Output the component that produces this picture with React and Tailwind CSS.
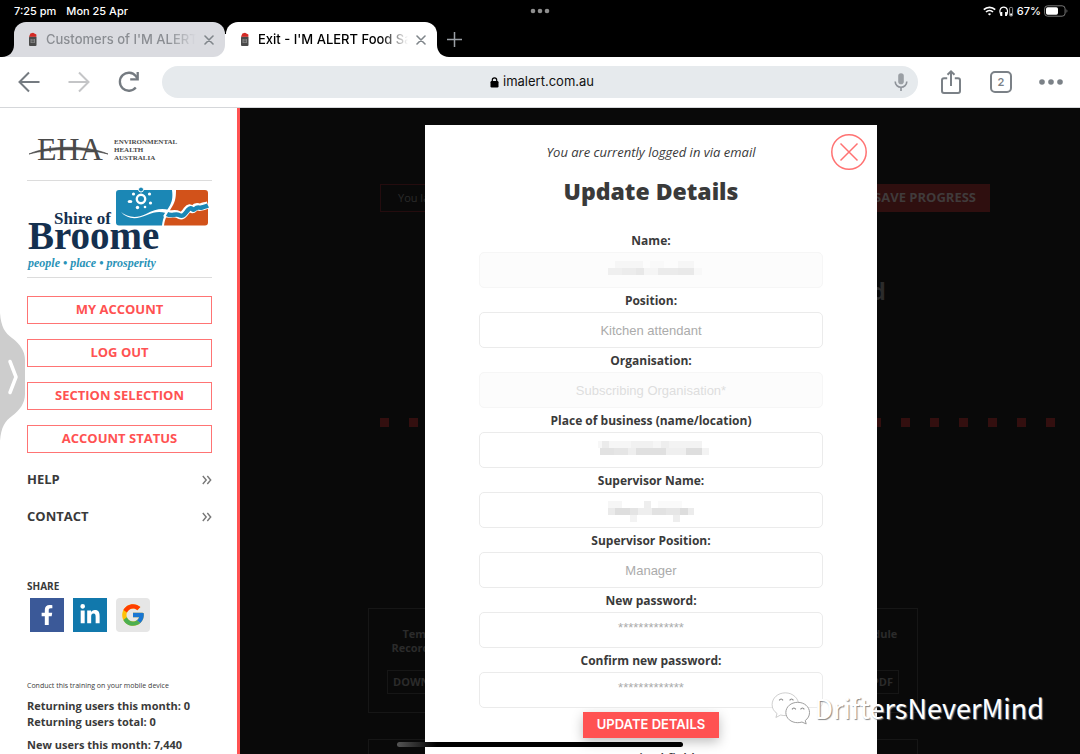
import { useState } from 'react'
import { FaFacebookF, FaLinkedinIn } from 'react-icons/fa'
import { FcGoogle } from 'react-icons/fc'

const accountLinks = ['MY ACCOUNT', 'LOG OUT', 'SECTION SELECTION', 'ACCOUNT STATUS']
const menuLinks = ['HELP', 'CONTACT']

// mask: [x, y, width, shade] cells of the hidden value, on a 7px grid
const fields = [
  {
    id: 'name',
    label: 'Name:',
    disabled: true,
    mask: [
      [7, 7, 28, '#f6f6f6'], [42, 7, 14, '#f9f9f9'], [70, 7, 16, '#f6f6f6'],
      [0, 14, 14, '#efefef'], [14, 14, 14, '#ececec'], [28, 14, 8, '#e8e8e8'], [36, 14, 14, '#f5f5f5'],
      [50, 14, 20, '#ebebeb'], [70, 14, 16, '#e9e9e9'], [86, 14, 8, '#f8f8f8'],
    ],
  },
  { id: 'position', label: 'Position:', value: 'Kitchen attendant' },
  { id: 'organisation', label: 'Organisation:', placeholder: 'Subscribing Organisation*', disabled: true },
  {
    id: 'business',
    label: 'Place of business (name/location)',
    mask: [
      [-10, 7, 4, '#f7f7f7'], [-6, 7, 7, '#ebebeb'], [1, 7, 22, '#f6f6f6'], [23, 7, 22, '#f1f1f1'],
      [45, 7, 8, '#f6f6f6'], [53, 7, 8, '#eeeeee'], [61, 7, 33, '#f3f3f3'],
      [-8, 14, 14, '#e2e2e2'], [6, 14, 14, '#e5e5e5'], [20, 14, 8, '#eeeeee'], [28, 14, 30, '#e0e0e0'],
      [58, 14, 20, '#efefef'], [78, 14, 16, '#dedede'], [94, 14, 7, '#f3f3f3'],
    ],
  },
  {
    id: 'supervisor',
    label: 'Supervisor Name:',
    mask: [
      [0, 7, 14, '#f6f6f6'], [36, 7, 7, '#eeeeee'], [50, 7, 24, '#fafafa'],
      [0, 14, 7, '#eaeaea'], [7, 14, 15, '#dedede'], [22, 14, 8, '#e4e4e4'], [30, 14, 14, '#eeeeee'],
      [44, 14, 14, '#e2e2e2'], [58, 14, 14, '#e6e6e6'], [72, 14, 8, '#dddddd'], [80, 14, 6, '#ececec'],
      [22, 21, 7, '#f3f3f3'], [65, 21, 7, '#eeeeee'],
    ],
  },
  { id: 'supervisor-position', label: 'Supervisor Position:', value: 'Manager' },
  { id: 'password', label: 'New password:', placeholder: '*************', type: 'password' },
  { id: 'confirm', label: 'Confirm new password:', placeholder: '*************', type: 'password' },
]

function Favicon() {
  return (
    <svg width="10" height="15" viewBox="0 0 10 15" className="shrink-0" aria-hidden="true">
      <rect x="1" y="4.5" width="7.5" height="9.5" rx="1" fill="#4a4a4a" />
      <rect x="2.6" y="7" width="4.2" height="4" fill="#8f8f8f" />
      <path d="M3.4 8h2.6M3.4 9.8h2.6" stroke="#333" strokeWidth="0.8" />
      <path d="M1 4.8 2.4 1.6 5 .8l3.4 1.6v2.4z" fill="#d42a25" />
    </svg>
  )
}

function CloseMark() {
  return (
    <svg width="10" height="10" viewBox="0 0 10 10" aria-hidden="true">
      <path d="M1 1l8 8M9 1l-8 8" stroke="#80868b" strokeWidth="1.6" strokeLinecap="round" />
    </svg>
  )
}

function Tab({ title, active }) {
  return (
    <div
      className={`relative flex h-[35px] w-[211px] items-center pr-[11px] pl-3.5 ${
        active ? 'rounded-t-xl bg-white text-black' : 'rounded-t-xl rounded-br-xl bg-[#dadbe0] text-[#8a8d92]'
      }`}
    >
      {!active && (
        <svg width="12" height="12" viewBox="0 0 12 12" className="absolute -left-3 bottom-0" aria-hidden="true">
          <path d="M12 0v12H0C7 12 12 7 12 0z" fill="#dadbe0" />
        </svg>
      )}
      {active && (
        <svg width="12" height="12" viewBox="0 0 12 12" className="absolute -right-3 bottom-0" aria-hidden="true">
          <path d="M0 0v12h12C5 12 0 7 0 0z" fill="#fff" />
        </svg>
      )}
      <Favicon />
      <a
        href="#tab"
        className="ml-2 flex-1 overflow-hidden whitespace-nowrap text-[13px] font-medium [mask-image:linear-gradient(to_right,black_82%,transparent)]"
      >
        {title}
      </a>
      <button type="button" aria-label="Close tab" className="ml-2">
        <CloseMark />
      </button>
    </div>
  )
}

function StatusBar() {
  return (
    <div className="relative flex h-[22px] items-center justify-between pl-3.5 pr-3 text-[11px] font-medium text-white">
      <div className="flex gap-2.5">
        <span>7:25 pm</span>
        <span>Mon 25 Apr</span>
      </div>
      <svg width="20" height="6" viewBox="0 0 20 6" className="absolute left-1/2 -translate-x-1/2" fill="#8e8e8e" aria-hidden="true">
        <circle cx="3" cy="3" r="2.3" />
        <circle cx="10" cy="3" r="2.3" />
        <circle cx="17" cy="3" r="2.3" />
      </svg>
      <div className="flex items-center gap-[3px]">
        <svg width="13" height="10" viewBox="0 0 13 10" fill="none" stroke="#fff" strokeWidth="1.7" aria-hidden="true">
          <path d="M.8 3.6a8.2 8.2 0 0 1 11.4 0M3 6a5 5 0 0 1 7 0" />
          <path d="M6.5 9.6 4.9 7.9a2.3 2.3 0 0 1 3.2 0z" fill="#fff" stroke="none" />
        </svg>
        <svg width="15" height="11" viewBox="0 0 15 11" fill="none" aria-hidden="true">
          <path d="M2.2 9.5C-.4 5 1.2 1.2 4.7 1.2S9.7 5 7.3 9.5" stroke="#fff" strokeWidth="1.2" />
          <path d="M2.4 6v4M7 6v4" stroke="#fff" strokeWidth="1.8" />
          <rect x="10.6" y="1.5" width="3" height="8.5" rx=".8" stroke="#aaa" strokeWidth=".8" />
          <path d="M11.2 7.5h1.8v2h-1.8z" fill="#fff" />
        </svg>
        <span>67%</span>
        <svg width="24" height="12" viewBox="0 0 24 12" fill="none" aria-hidden="true">
          <rect x=".6" y=".8" width="20.5" height="10.4" rx="3" stroke="#777" />
          <rect x="2" y="2.2" width="12" height="7.6" rx="1.7" fill="#fff" />
          <path d="M22.5 4.2c1.2.6 1.2 3 0 3.6z" fill="#777" />
        </svg>
      </div>
    </div>
  )
}

function Toolbar() {
  const button = 'flex h-full w-[50px] shrink-0 items-center justify-center'
  return (
    <div className="flex h-[51px] items-center border-b border-[#d5d7da] bg-white px-1">
      <button type="button" aria-label="Back" className={button}>
        <svg width="24" height="24" viewBox="0 0 24 24" fill="none" stroke="#757b81" strokeWidth="2">
          <path d="M22.5 12h-20M12 2.5 2.5 12l9.5 9.5" />
        </svg>
      </button>
      <button type="button" aria-label="Forward" className={button}>
        <svg width="24" height="24" viewBox="0 0 24 24" fill="none" stroke="#c4c5c7" strokeWidth="2">
          <path d="M1.5 12h20M12 2.5l9.5 9.5-9.5 9.5" />
        </svg>
      </button>
      <button type="button" aria-label="Reload" className={button}>
        <svg width="24" height="24" viewBox="0 0 24 24" fill="none" stroke="#757b81" strokeWidth="2.3">
          <path d="M18.8 17.5a9 9 0 1 1 0-11.5l1.7 2.5" />
          <path d="M20.7 2v7.3h-7.5" />
        </svg>
      </button>
      <div className="mx-2 flex h-8 flex-1 items-center rounded-full bg-[#e6eaed] pr-2.5 pl-7">
        <div className="flex flex-1 items-center justify-center gap-1">
          <svg width="9" height="11" viewBox="0 0 9 11" aria-hidden="true">
            <rect x=".5" y="4" width="8" height="6.5" rx="1.2" />
            <path d="M2.3 4.500V3a2.200 2.200 0 0 1 4.400 0v1.500" fill="none" stroke="#000" strokeWidth="1.2" />
          </svg>
          <span className="text-[13px] text-[#111]">imalert.com.au</span>
        </div>
        <button type="button" aria-label="Voice search">
          <svg width="14" height="20" viewBox="0 0 14 20" fill="none" stroke="#8d9298" strokeWidth="1.6">
            <rect x="4.2" y="1.2" width="5.6" height="11" rx="2.8" fill="#9a9fa4" stroke="none" />
            <path d="M1.2 9.5a5.8 5.8 0 0 0 11.6 0M7 15.3V19" />
          </svg>
        </button>
      </div>
      <button type="button" aria-label="Share" className={button}>
        <svg width="22" height="26" viewBox="0 0 22 26" fill="none" stroke="#7b8187" strokeWidth="2">
          <path d="M7.2 9.2H4a2 2 0 0 0-2 2V22a2 2 0 0 0 2 2h14a2 2 0 0 0 2-2V11.2a2 2 0 0 0-2-2h-3.2M11 17V2.5M7.5 5.8 11 2.3l3.5 3.5" />
        </svg>
      </button>
      <button type="button" aria-label="Open tabs" className={button}>
        <span className="flex size-[22px] items-center justify-center rounded-[5px] border-2 border-[#7b8187] text-[11px] font-semibold text-[#7b8187]">
          2
        </span>
      </button>
      <button type="button" aria-label="More" className={button}>
        <svg width="26" height="8" viewBox="0 0 26 8" fill="#7b8187">
          <circle cx="4" cy="4" r="2.8" />
          <circle cx="13" cy="4" r="2.8" />
          <circle cx="22" cy="4" r="2.8" />
        </svg>
      </button>
    </div>
  )
}

function EhaLogo() {
  return (
    <svg width="185" height="30" viewBox="0 0 185 30" fill="#4a4a4a" role="img" aria-label="Environmental Health Australia">
      <g fontFamily="Liberation Serif, serif">
        <text x="10" y="26" fontSize="32">EHA</text>
        <g fontSize="7" fontWeight="bold">
          <text x="87" y="10">ENVIRONMENTAL</text>
          <text x="87" y="18">HEALTH</text>
          <text x="87" y="26">AUSTRALIA</text>
        </g>
      </g>
      <path d="M2 20C22 11 60 11 81 20 58 14 24 14 2 20z" stroke="#4a4a4a" strokeWidth=".7" />
    </svg>
  )
}

function BroomeLogo() {
  return (
    <svg width="185" height="90" viewBox="0 0 185 90" role="img" aria-label="Shire of Broome">
      <path d="M92 3h53c1 8 0 12-3 17-4 6-6 11-7 18.5H92a3 3 0 0 1-3-3V6a3 3 0 0 1 3-3z" fill="#1b87b5" />
      <path d="M149 3h29a3 3 0 0 1 3 3v29.5a3 3 0 0 1-3 3h-41c1-7 3-11 7-17s5-10 5-18.5z" fill="#d2521a" />
      <path d="M94 25c6 5 15 7 25 2 9-5 16-6 23-4l-3 3c-7-2-12-1-19 2-11 5-20 4-26-3z" fill="#fff" />
      <path d="M138 26c5 3 9-1 13 1.5s5 1 9-4.5 4 2 7-1.5 4-.5 7-1.5 4-1 7-2" stroke="#fff" strokeWidth="7.5" fill="none" />
      <path d="M140 27c5 3 8-1 12 1s5 0 9-5 4 2 7-1 4-.5 7-1.5 4-1 6-2" stroke="#1b87b5" strokeWidth="4.5" fill="none" />
      <circle cx="114" cy="12" r="4.2" fill="none" stroke="#fff" strokeWidth="2.4" />
      <circle cx="114" cy="2.5" r="2.5" fill="#1b87b5" stroke="#fff" />
      <g fill="#fff">
        <circle cx="106.5" cy="7" r="1.6" />
        <circle cx="122.5" cy="7" r="1.6" />
        <ellipse cx="103" cy="14.5" rx="2.4" ry="1.6" />
        <circle cx="123.5" cy="16" r="1.6" />
        <circle cx="110.5" cy="20.5" r="1.7" />
        <circle cx="118" cy="20" r="1.3" />
      </g>
      <g fontFamily="Liberation Serif, serif" fill="#14304f">
        <text x="27" y="37" fontSize="17" fontWeight="bold">Shire of</text>
        <text x="1" y="62" fontSize="39" fontWeight="bold">Broome</text>
        <text x="1" y="80" fontSize="12" fontWeight="bold" fontStyle="italic" fill="#2a93b8">people • place • prosperity</text>
      </g>
    </svg>
  )
}

function Sidebar() {
  return (
    <aside className="flex w-60 shrink-0 flex-col border-r-3 border-[#ff5252] bg-white pl-[27px] pr-[25px] pt-[26px] text-[#3a3a3a]">
      <div className="border-b border-[#dcdcdc] pb-4">
        <EhaLogo />
      </div>
      <div className="border-b border-[#dcdcdc] pt-1.5">
        <BroomeLogo />
      </div>
      <nav className="mt-[18px]">
        <div className="flex flex-col gap-[15px]">
          {accountLinks.map((link) => (
            <a
              key={link}
              href="#account"
              className="flex h-7 items-center justify-center border border-[#ff7474] text-[13px] font-bold text-[#ff5252]"
            >
              {link}
            </a>
          ))}
        </div>
        <div className="mt-2 flex flex-col">
          {menuLinks.map((link) => (
            <a key={link} href="#menu" className="flex h-[37px] items-center justify-between text-[13px] font-bold">
              {link}
              <svg width="10" height="10" viewBox="0 0 10 10" fill="none" stroke="#777" strokeWidth="1.4" aria-hidden="true">
                <path d="M.8 1l3.4 4L.8 9M5.3 1l3.4 4-3.4 4" />
              </svg>
            </a>
          ))}
        </div>
      </nav>
      <h2 className="mt-[43px] text-[10px] leading-4 font-bold">SHARE</h2>
      <div className="mt-1 ml-[3px] flex gap-[9px]">
        <a href="#facebook" aria-label="Facebook" className="flex size-[34px] items-center justify-center bg-[#3b5998] text-white">
          <FaFacebookF size={20} />
        </a>
        <a href="#linkedin" aria-label="LinkedIn" className="flex size-[34px] items-center justify-center bg-[#1178ac] text-white">
          <FaLinkedinIn size={22} />
        </a>
        <a href="#google" aria-label="Google" className="flex size-[34px] items-center justify-center rounded-sm bg-[#e6e6e6]">
          <FcGoogle size={26} />
        </a>
      </div>
      <p className="mt-12 text-[7px] leading-3">Conduct this training on your mobile device</p>
      <div className="mt-1.5 text-[11px] leading-4 font-bold whitespace-nowrap">
        <p>Returning users this month: 0</p>
        <p>Returning users total: 0</p>
        <p className="mt-[7px]">New users this month: 7,440</p>
      </div>
    </aside>
  )
}

function DimmedPage() {
  return (
    <div className="pt-[76px] text-[#2b2b2b]">
      <div className="ml-[140px] mr-[90px] flex h-7 text-[11px]">
        <p className="flex flex-1 items-center border border-[#240c0e] pl-[17px]">You last</p>
        <button type="button" className="bg-[#2f0f0f] px-3.5 text-[13px] font-bold text-[#403b3b]">
          SAVE PROGRESS
        </button>
      </div>
      <h2 className="mt-[65px] mr-[194px] text-right text-[24px] leading-7 font-bold">Food</h2>
      <div className="mt-[113px] ml-[140px] mr-[25px] flex justify-between">
        {Array.from({ length: 24 }, (_, i) => (
          <span key={i} className="size-[9px] bg-[#330f0f]" />
        ))}
      </div>
      <div className="mt-[181px] ml-32 mr-[162px] flex h-[105px] justify-between border border-[#161616] px-[18px] pt-[18px] text-center text-[11px] leading-[14px] font-bold">
        <div className="flex flex-col items-center">
          <p className="h-7">Temperature<br />Recording Sheets</p>
          <button type="button" className="mt-[15px] h-6 border border-[#161616] px-[5px]">DOWNLOAD PDF</button>
        </div>
        <div className="flex flex-col items-center">
          <p className="h-7">Cleaning Schedule</p>
          <button type="button" className="mt-[15px] h-6 border border-[#161616] px-[5px]">DOWNLOAD PDF</button>
        </div>
      </div>
      <div className="mt-[26px] ml-32 mr-[162px] h-24 border border-[#161616]" />
    </div>
  )
}

function Field({ field }) {
  const [value, setValue] = useState(field.value ?? '')

  return (
    <div className="relative">
      <label htmlFor={field.id} className="block pt-0.5 text-center text-[12px] leading-[22px] font-bold">
        {field.label}
      </label>
      <input
        id={field.id}
        type={field.type ?? 'text'}
        value={value}
        placeholder={field.placeholder}
        disabled={field.disabled}
        onChange={(e) => setValue(e.target.value)}
        className={`block h-9 w-full rounded-[5px] border border-[#ebebeb] bg-white text-center font-['Liberation_Sans',sans-serif] text-[13px] text-[#ababab] placeholder:text-[#ababab] disabled:border-[#f6f6f6] disabled:bg-[#fcfcfc] disabled:placeholder:text-[#dedede] ${
          field.type === 'password' ? 'pb-1.5' : ''
        }`}
      />
      {field.mask && (
        <svg
          width="118"
          height="30"
          viewBox="-10 0 118 30"
          className="absolute bottom-1 left-[119px]"
          shapeRendering="crispEdges"
          aria-hidden="true"
        >
          {field.mask.map(([x, y, width, fill], i) => (
            <rect key={i} x={x} y={y} width={width} height="7" fill={fill} />
          ))}
        </svg>
      )}
    </div>
  )
}

function UpdateDetails() {
  return (
    <div className="absolute inset-0 flex items-start justify-center pt-[17px] pr-[18px]">
      <form
        aria-labelledby="update-title"
        onSubmit={(e) => e.preventDefault()}
        className="relative flex w-[452px] flex-col items-center bg-white px-[54px] pt-[15px] pb-10 text-[#3a3a3a]"
      >
        <button type="button" aria-label="Close" className="absolute top-[9px] right-2.5">
          <svg width="36" height="36" viewBox="0 0 36 36" fill="none" stroke="#ff7272" strokeWidth="1.5">
            <circle cx="18" cy="18" r="17.2" />
            <path d="M9.5 9.5l17 17M26.5 9.5l-17 17" />
          </svg>
        </button>
        <p className="text-[13px] leading-6 italic">You are currently logged in via email</p>
        <h1 id="update-title" className="mt-[13px] text-[23px] leading-7 font-extrabold">Update Details</h1>
        <div className="mt-[23px] w-full">
          {fields.map((field) => (
            <Field key={field.id} field={field} />
          ))}
        </div>
        <button
          type="submit"
          className="mt-1 h-[26px] bg-[#ff5252] px-3.5 font-['Inter',sans-serif] text-[13px] font-semibold text-white shadow-[0_4px_12px_rgba(0,0,0,0.25)]"
        >
          UPDATE DETAILS
        </button>
        <p className="mt-2.5 text-[13px] leading-5 font-semibold">Required field</p>
      </form>
    </div>
  )
}

function Watermark() {
  return (
    <div className="absolute right-9 bottom-7 flex items-center font-['Noto_Sans_CJK_SC',sans-serif] text-[27px] leading-9 text-white">
      <svg width="44" height="36" viewBox="0 0 46 38" fill="#fff" aria-hidden="true">
        <g stroke="#999" strokeWidth="1">
          <path d="M16 3C8 3 2 8.5 2 15.5c0 4 2 7 5.2 9.3L6 29l5-2.600c2 .5 3.5.6 5.5.6 8 0 13.5-5 13.5-11.5S24 3 16 3z" strokeOpacity=".5" />
          <path d="M29 13c-7 0-12.5 4.7-12.5 10.8S22 34.5 29 34.5c1.7 0 3-.2 4.5-.7l4.5 2-1-3.6c2.8-2 4.5-4.9 4.5-8.4C41.5 17.7 36 13 29 13z" />
        </g>
        <path d="M9.5 11q2-3 4 0M20.500 11q2-3 4 0M23 20.500q2-3 4 0M32 20.500q2-3 4 0" fill="none" stroke="#888" strokeWidth="1.2" />
      </svg>
      <span className="[text-shadow:1px_1px_1px_#888]">DriftersNeverMind</span>
    </div>
  )
}

export default function App() {
  return (
    <div className="relative flex h-screen flex-col overflow-hidden bg-black font-['Inter',sans-serif]">
      <header>
        <StatusBar />
        <div className="flex items-center pl-3.5">
          <div className="flex gap-px bg-[linear-gradient(to_bottom,transparent_35%,white_35%)]">
            <Tab title="Customers of I'M ALERT Food" />
            <Tab title="Exit - I'M ALERT Food Safety" active />
          </div>
          <button type="button" aria-label="New tab" className="ml-2.5">
            <svg width="15" height="15" viewBox="0 0 15 15" stroke="#9a9fa5" strokeWidth="1.5">
              <path d="M7.5 0v15M0 7.5h15" />
            </svg>
          </button>
        </div>
        <Toolbar />
      </header>
      <div className="flex min-h-0 flex-1 font-['Open_Sans',sans-serif]">
        <Sidebar />
        <main className="relative flex-1 overflow-hidden bg-[#090909]">
          <DimmedPage />
          <UpdateDetails />
        </main>
      </div>
      <button type="button" aria-label="Open side panel" className="absolute top-[313px] left-0">
        <svg width="25" height="128" viewBox="0 0 25 128">
          <path d="M0 0C1 14 5 20 12 25c8 6 13 13 13 22v34c0 9-5 16-13 22C5 108 1 114 0 128z" fill="#cdcdcd" />
          <path d="M10 48.5 16 64l-6 15.500" fill="none" stroke="#fff" strokeWidth="3.5" strokeLinecap="round" strokeLinejoin="round" />
        </svg>
      </button>
      <div className="absolute bottom-[7px] left-[397px] h-[5px] w-[286px] rounded-full bg-[linear-gradient(to_right,#555,#000_14%)]" />
      <Watermark />
    </div>
  )
}
